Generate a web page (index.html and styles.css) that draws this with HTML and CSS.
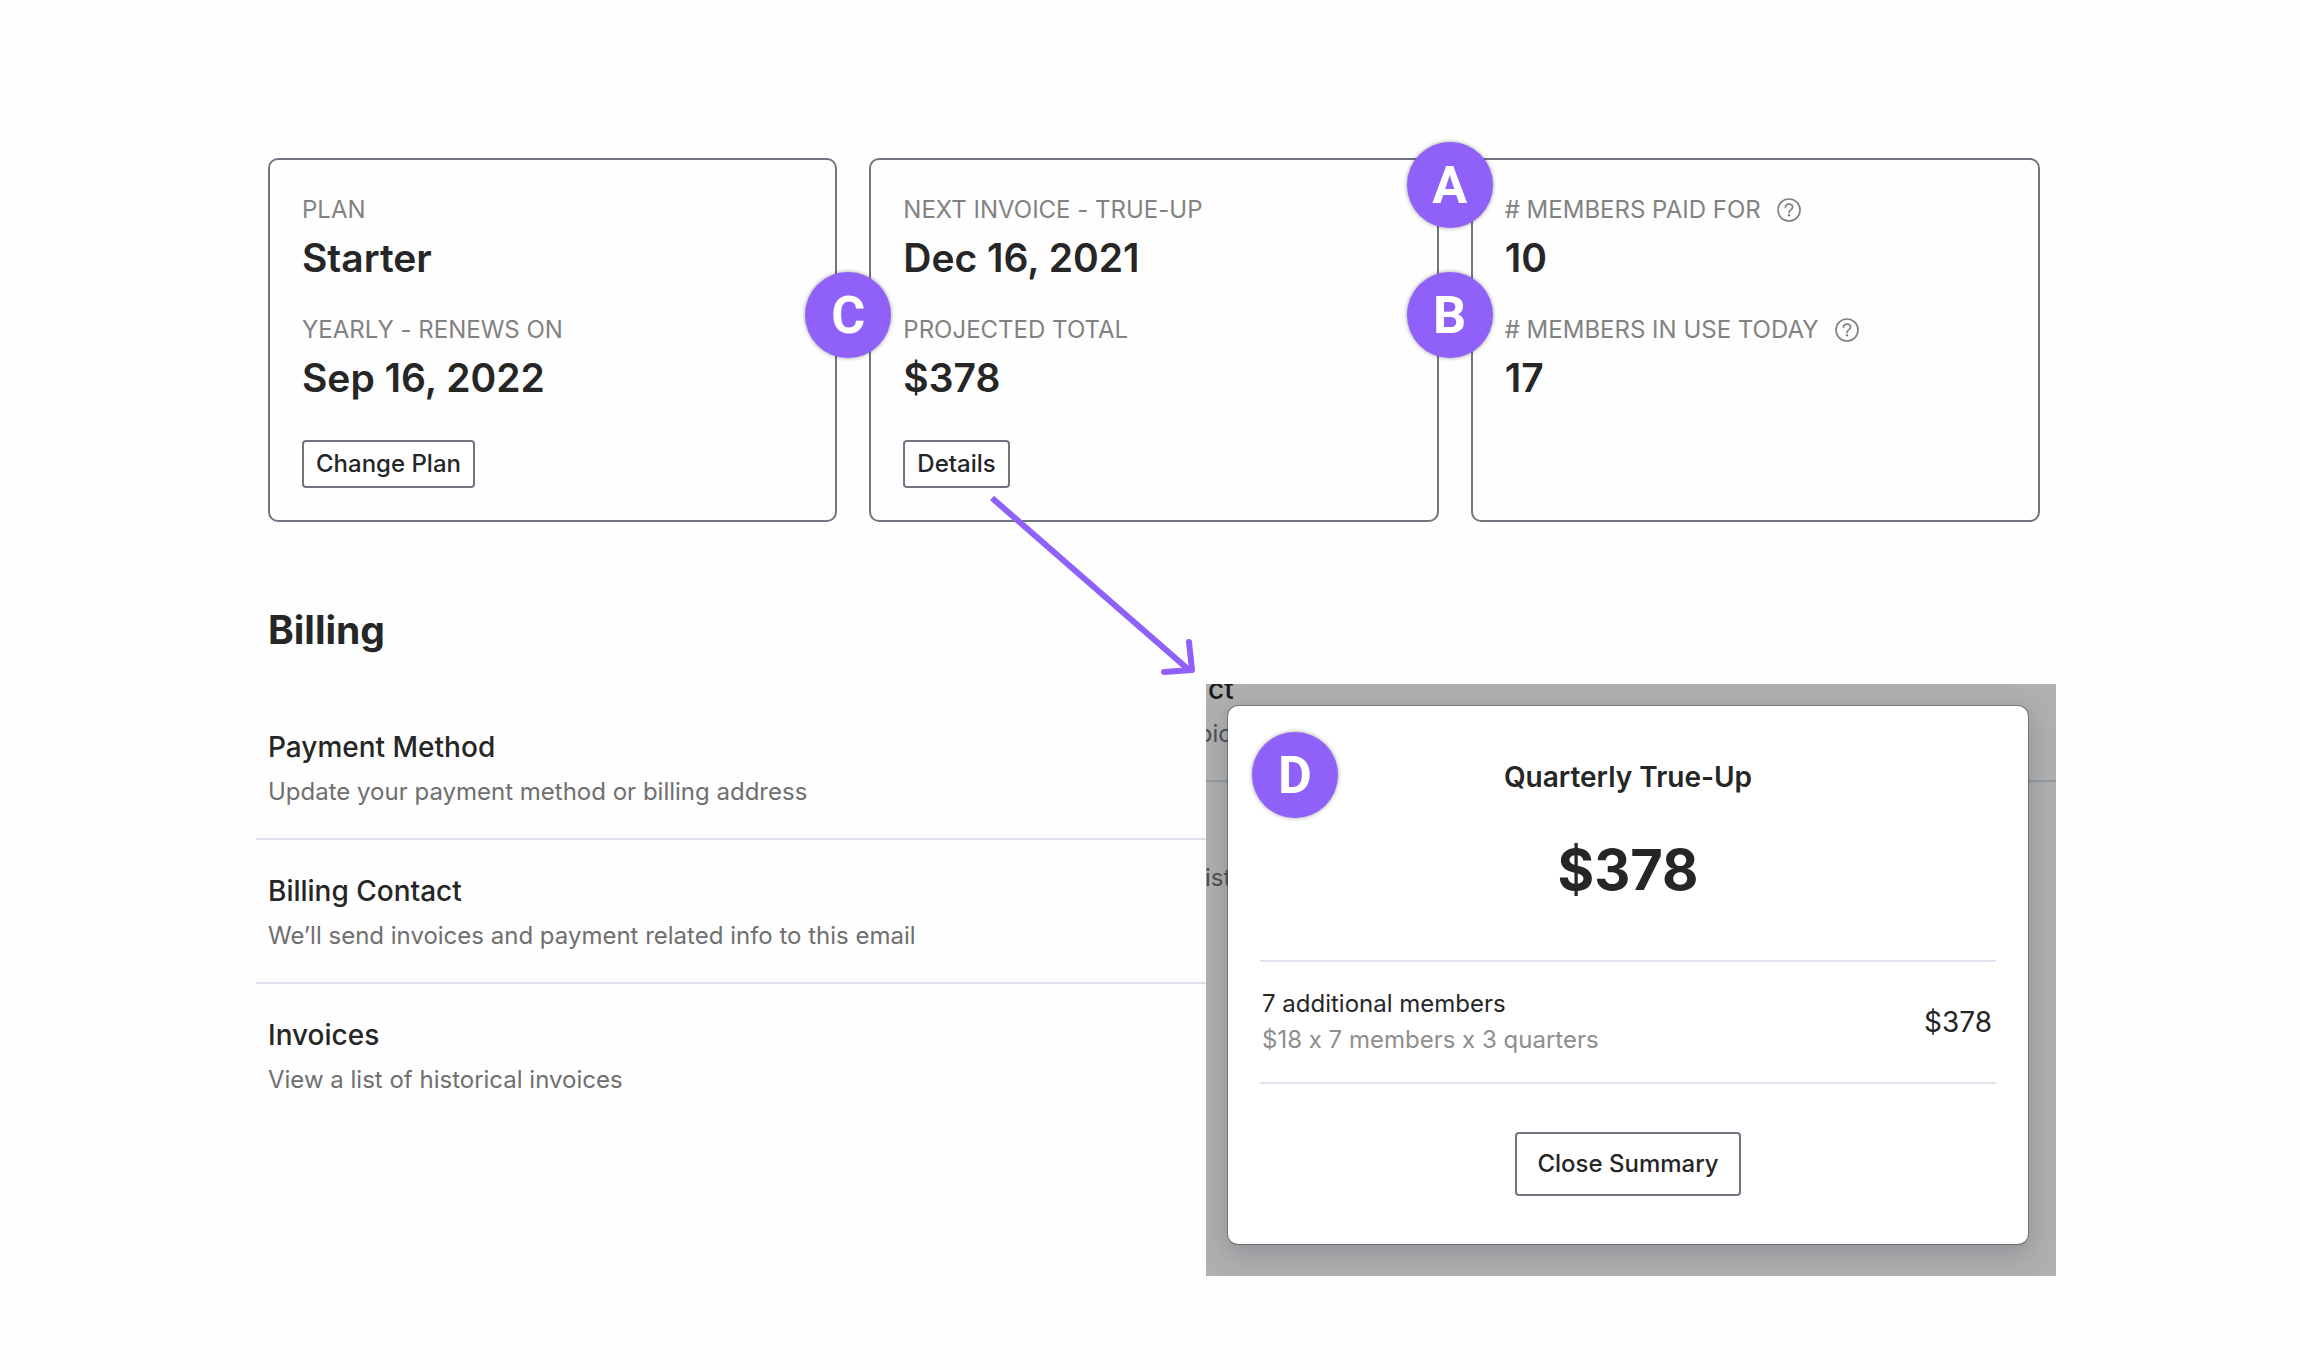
FILE: index.html
```html
<!DOCTYPE html>
<html lang="en">
<head>
<meta charset="utf-8">
<title>Billing</title>
<link rel="stylesheet" href="styles.css">
</head>
<body>
<main class="page">
  <section class="cards" aria-label="Plan summary">
    <article class="card">
      <dl class="facts">
        <div class="fact"><dt>PLAN</dt><dd>Starter</dd></div>
        <div class="fact"><dt>YEARLY - RENEWS ON</dt><dd>Sep 16, 2022</dd></div>
      </dl>
      <button class="btn" type="button">Change Plan</button>
    </article>
    <article class="card">
      <span class="marker marker-low">C</span>
      <dl class="facts">
        <div class="fact"><dt>NEXT INVOICE - TRUE-UP</dt><dd>Dec 16, 2021</dd></div>
        <div class="fact"><dt>PROJECTED TOTAL</dt><dd>$378</dd></div>
      </dl>
      <button class="btn" type="button">Details</button>
    </article>
    <article class="card">
      <span class="marker marker-high">A</span>
      <span class="marker marker-low">B</span>
      <dl class="facts">
        <div class="fact">
          <dt># MEMBERS PAID FOR
            <svg class="help" viewBox="0 0 24 24" aria-hidden="true"><circle cx="12" cy="12" r="11"/><path d="M8.400 9.200C8.500 7.200 10 6.100 12 6.100s3.600 1.200 3.600 3c0 1.300-.7 2.100-1.800 2.800-1.200.7-1.800 1.300-1.800 2.500"/><circle class="help-dot" cx="12" cy="17.300" r="1.200"/></svg>
          </dt><dd>10</dd>
        </div>
        <div class="fact">
          <dt># MEMBERS IN USE TODAY
            <svg class="help" viewBox="0 0 24 24" aria-hidden="true"><circle cx="12" cy="12" r="11"/><path d="M8.400 9.200C8.500 7.200 10 6.100 12 6.100s3.600 1.200 3.600 3c0 1.300-.7 2.100-1.800 2.800-1.200.7-1.800 1.300-1.800 2.500"/><circle class="help-dot" cx="12" cy="17.300" r="1.200"/></svg>
          </dt><dd>17</dd>
        </div>
      </dl>
    </article>
  </section>

  <section class="billing">
    <h1>Billing</h1>
    <ul class="rows">
      <li class="row"><h2>Payment Method</h2><p>Update your payment method or billing address</p></li>
      <li class="row"><h2>Billing Contact</h2><p>We’ll send invoices and payment related info to this email</p></li>
      <li class="row"><h2>Invoices</h2><p>View a list of historical invoices</p></li>
    </ul>
  </section>

  <svg class="arrow" viewBox="0 0 212 190" aria-hidden="true">
    <path class="arrow-shaft" d="M8 13 205 185"/>
    <path d="M205 157 208 185 180 187"/>
  </svg>

  <div class="overlay">
    <div class="behind" aria-hidden="true">
      <div class="row"><h2>ct</h2><p class="cut">oic</p></div>
      <div class="row"><h2>&nbsp;</h2><p class="edge">ist</p></div>
    </div>
    <div class="dialog" role="dialog" aria-labelledby="dialog-title">
      <span class="marker marker-dialog">D</span>
      <h2 id="dialog-title" class="dialog-title">Quarterly True-Up</h2>
      <p class="total">$378</p>
      <div class="line-item">
        <div>
          <p>7 additional members</p>
          <p class="muted">$18 x 7 members x 3 quarters</p>
        </div>
        <p class="amount">$378</p>
      </div>
      <button class="btn btn-large" type="button">Close Summary</button>
    </div>
  </div>
</main>
</body>
</html>
```
FILE: styles.css
```css
:root {
  --ink: #262627;
  --label: #828282;
  --muted: #6f6f6f;
  --outline: #717580;
  --rule: #dce0ec;
  --accent: #9061f9;
}

* { box-sizing: border-box; }

body,
h1,
h2,
p,
ul,
dl,
dd { margin: 0; padding: 0; }

body {
  background: #fefefe;
  color: var(--ink);
  font-family: Inter, "Liberation Sans", sans-serif;
  font-size: 24px;
  font-variant-ligatures: no-contextual;
  line-height: 36px;
}

.page {
  position: relative;
  min-height: 100vh;
  padding: 158px 260px 240px 268px;
}

.cards {
  display: grid;
  grid-template-columns: repeat(3, 1fr);
  gap: 32px;
}

.card {
  position: relative;
  padding: 32px;
  border: 2px solid var(--outline);
  border-radius: 10px;
}

.facts {
  display: grid;
  gap: 24px;
}

.fact dt {
  display: flex;
  align-items: center;
  gap: 16px;
  color: var(--label);
}

.fact dd {
  font-size: 39px;
  font-weight: 600;
  line-height: 60px;
}

.help {
  width: 24px;
  height: 24px;
  fill: none;
  stroke: var(--label);
  stroke-width: 1.700;
  stroke-linecap: round;
}

.help-dot {
  fill: var(--label);
  stroke: none;
}

.btn {
  height: 48px;
  padding: 0 12px;
  border: 2px solid var(--outline);
  border-radius: 4px;
  background: #fff;
  color: var(--ink);
  font: 500 24px/36px Inter, "Liberation Sans", sans-serif;
}

.card .btn { margin-top: 32px; }

.marker {
  position: absolute;
  z-index: 1;
  display: grid;
  place-items: center;
  width: 86px;
  height: 86px;
  padding-top: 2px;
  border-radius: 50%;
  background: var(--accent);
  box-shadow: 0 0 4px rgba(0, 0, 0, 0.4);
  color: #fff;
  font: 700 52px/60px Roboto, "Liberation Sans", sans-serif;
}

.marker-high { top: -18px; left: -66px; }
.marker-low { top: 112px; left: -66px; }
.marker-dialog { top: 26px; left: 24px; }

.billing { margin-top: 78px; }

.billing h1 {
  margin-bottom: 36px;
  font-size: 39px;
  font-weight: 700;
  line-height: 60px;
}

.rows {
  margin-left: -12px;
  list-style: none;
}

.row {
  display: grid;
  gap: 6px;
  padding: 30px 12px 28px;
  border-bottom: 2px solid var(--rule);
}

.row:last-child { border-bottom-color: transparent; }

.row h2 {
  font-size: 28px;
  font-weight: 500;
  line-height: 42px;
}

.row p { color: var(--muted); }

.arrow {
  position: absolute;
  top: 485px;
  left: 984px;
  width: 212px;
  height: 190px;
  fill: none;
  stroke: var(--accent);
  stroke-width: 6;
  stroke-linecap: round;
  stroke-linejoin: round;
}

.arrow-shaft { stroke-linecap: butt; }

.overlay {
  position: absolute;
  top: 684px;
  right: 244px;
  width: 850px;
  padding: 22px 28px 32px 22px;
  background: #b0b0b0;
  overflow: hidden;
}

.behind {
  position: absolute;
  top: -46px;
  left: 0;
  right: 0;
}

.behind .row {
  padding-left: 2px;
  border-color: #959ba4;
}

.behind .row:last-child { border-color: transparent; }
.behind h2 { color: #1b1b1c; }
.behind p { color: #4d4d4e; }
.behind .cut { margin-left: -10px; }
.behind .edge { margin-left: -3px; }

.dialog {
  position: relative;
  display: flex;
  flex-direction: column;
  align-items: center;
  padding: 50px 32px 48px;
  border-radius: 10px;
  background: #fff;
  box-shadow: 0 0 0 1px rgba(60, 62, 66, 0.45), 0 8px 28px rgba(80, 88, 105, 0.4);
}

.dialog-title {
  font-size: 28px;
  font-weight: 600;
  line-height: 42px;
}

.total {
  margin: 30px 0 48px;
  font-size: 56px;
  font-weight: 700;
  line-height: 84px;
}

.line-item {
  display: flex;
  align-items: center;
  justify-content: space-between;
  align-self: stretch;
  height: 124px;
  margin-bottom: 48px;
  padding: 0 4px 0 2px;
  border: solid #e0e4ef;
  border-width: 2px 0;
}

.muted { color: #8e8e8e; }

.amount { font-size: 28px; }

.btn-large {
  height: 64px;
  padding: 0 20px;
}
```
